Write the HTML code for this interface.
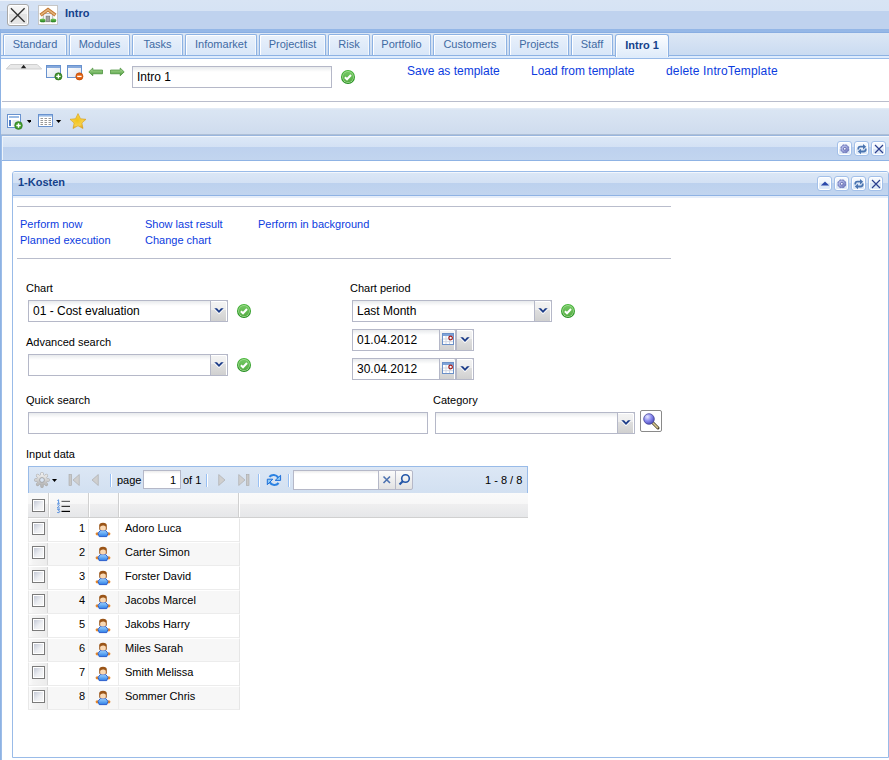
<!DOCTYPE html>
<html><head><meta charset="utf-8">
<style>
*{margin:0;padding:0;box-sizing:border-box}
html,body{width:889px;height:760px;overflow:hidden;background:#fff;font-family:"Liberation Sans",sans-serif;font-size:11px;color:#000}
.a{position:absolute}
.t{position:absolute;white-space:nowrap;line-height:13px}
/* header */
#hdr{left:0;top:0;width:889px;height:29px;background:linear-gradient(#d8e4f4 0,#d6e3f4 11px,#bfd2ee 11px,#bfd2ee 29px)}
#hdrl{left:0;top:0;width:90px;height:29px;background:linear-gradient(#eef3fa 0,#eef3fa 1px,#d5e2f4 1px,#d5e2f4 11px,#c8d9f1 11px,#c8d9f1 29px)}
#hline{left:0;top:29px;width:889px;height:4px;background:linear-gradient(#93b6e6 0,#96b8e7 3px,#89aee2 3px)}
#strip{left:0;top:33px;width:889px;height:22px;background:linear-gradient(#dce7f5,#cadbf1)}
.tab{position:absolute;top:34px;height:21px;border:1px solid #8db2e3;border-bottom:none;border-radius:2px 2px 0 0;background:linear-gradient(#e9f1fb,#d8e6f8);box-shadow:inset 1px 1px 0 #fff,inset -1px 0 0 #f4f8fd;color:#416aa3;text-align:center;line-height:19px;font-size:11px}
.tab.act{top:34px;height:23px;background:linear-gradient(#fdfeff 0,#f0f6fd 40%,#deebfa);color:#15428b;font-weight:bold;line-height:20px;border-radius:3px 3px 0 0}
#sl1{left:0;top:55px;width:889px;height:1px;background:#8db2e3}
#sl2{left:0;top:56px;width:889px;height:2px;background:#deecfd}
#sl3{left:0;top:58px;width:889px;height:1px;background:#99bbe8}
#lb{left:0;top:29px;width:1px;height:731px;background:#8db2e3}
#lb2{left:1px;top:136px;width:1px;height:624px;background:#9dbde8}
.lnk{color:#0c3ce0}
.fld{position:absolute;height:22px;border:1px solid #b5b8c8;background:linear-gradient(#e8eaec 0,#f6f7f8 3px,#fff 5px,#fff);font-size:12px;line-height:20px;padding-left:4px}
.trg{position:absolute;width:18px;height:22px;border:1px solid #b5b8c8;background:linear-gradient(#f4f4f4 0,#ededed 45%,#dfdfdf 46%,#d0d0d0 100%);border-radius:0 2px 0 0;box-shadow:inset -1px 1px 0 #fff}
.chk{position:absolute;width:14px;height:14px}
.pbtn{position:absolute;width:15px;height:15px;border:1px solid #a3c0e9;border-radius:3px;background:linear-gradient(#f7fafe 0,#eef4fc 50%,#dbe7f7 50%,#dfeaf8 100%);box-shadow:inset 0 0 0 1px #fff}
.gcb{position:absolute;width:13px;height:13px;border:2px solid #8c8c8c;background:linear-gradient(135deg,#fff,#dcdcdc)}
</style></head><body>
<svg width="0" height="0" style="position:absolute">
<defs>
<symbol id="gear" viewBox="0 0 14 14"><defs><linearGradient id="gr" x1="0" y1="0" x2="1" y2="1"><stop offset="0" stop-color="#c8cef2"/><stop offset=".5" stop-color="#a0a8de"/><stop offset="1" stop-color="#6a72b8"/></linearGradient></defs><g transform="translate(6.8 6.8)"><g fill="#7a82c2"><rect x="-0.95" y="-4.5" width="1.9" height="1.6" transform="rotate(22)"/><rect x="-0.95" y="-4.5" width="1.9" height="1.6" transform="rotate(67)"/><rect x="-0.95" y="-4.5" width="1.9" height="1.6" transform="rotate(112)"/><rect x="-0.95" y="-4.5" width="1.9" height="1.6" transform="rotate(157)"/><rect x="-0.95" y="-4.5" width="1.9" height="1.6" transform="rotate(202)"/><rect x="-0.95" y="-4.5" width="1.9" height="1.6" transform="rotate(247)"/><rect x="-0.95" y="-4.5" width="1.9" height="1.6" transform="rotate(292)"/><rect x="-0.95" y="-4.5" width="1.9" height="1.6" transform="rotate(337)"/></g><circle r="3.8" fill="url(#gr)" stroke="#6a72b6" stroke-width=".6"/><circle r="1.4" fill="#f4f6ff" stroke="#555da4" stroke-width=".8"/></g></symbol>
<symbol id="refr" viewBox="0 0 14 14"><path d="M3.3 7.6V6.6q0-1.9 2-1.9H8.6" stroke="#4a74b0" stroke-width="1.8" fill="none"/><path d="M8 2L11.2 4.7L8 7.4z" fill="#4a74b0"/><path d="M10.7 6.6V7.6q0 1.9-2 1.9H5.4" stroke="#4a74b0" stroke-width="1.8" fill="none"/><path d="M6 6.8L2.8 9.5L6 12.2z" fill="#4a74b0"/></symbol>
<symbol id="clos" viewBox="0 0 14 14"><path d="M3 3L11 11M11 3L3 11" stroke="#2c3f8e" stroke-width="1.15"/></symbol>
<symbol id="up" viewBox="0 0 14 14"><path d="M2.8 8.6L7 4.6L11.2 8.6z" fill="#2b49aa"/></symbol>
<symbol id="okc" viewBox="0 0 14 14"><defs><linearGradient id="okg" x1="0" y1="0" x2="0" y2="1"><stop offset="0" stop-color="#72c862"/><stop offset="1" stop-color="#56ad44"/></linearGradient><linearGradient id="okr" x1="0" y1="0" x2="0" y2="1"><stop offset="0" stop-color="#48b83a"/><stop offset="1" stop-color="#1f8a1c"/></linearGradient></defs><circle cx="7" cy="7" r="7" fill="url(#okr)"/><circle cx="7" cy="7" r="5.9" fill="#a8dc98"/><circle cx="7" cy="7" r="5.2" fill="url(#okg)"/><path d="M3.9 7.3L6 9.3L10 5" stroke="#fff" stroke-width="2" fill="none"/></symbol>
<symbol id="chev" viewBox="0 0 10 7"><path d="M0 1.2H2.6L5 3.6L7.4 1.2H10L5 6.2z" fill="#fff" opacity=".9"/><path d="M0.3 0.3H3L5 2.4L7 0.3H9.7L5 5z" fill="#1c3c88"/></symbol>
<symbol id="cal" viewBox="0 0 12 12"><rect x="0.5" y="0.5" width="11" height="11" fill="#fff" stroke="#6b90c8"/><rect x="1" y="1" width="10" height="2" fill="#7ea3d8"/><path d="M4 3v8M7.5 3v8M1 6h10M1 8.7h10" stroke="#cfd6e2" stroke-width="1"/><circle cx="8.6" cy="5" r="1.8" fill="none" stroke="#a01818" stroke-width="1.2"/></symbol>
<symbol id="pers" viewBox="0 0 16 16"><defs><linearGradient id="pg" x1="0" y1="0" x2="0" y2="1"><stop offset="0" stop-color="#9ad2ff"/><stop offset="1" stop-color="#2f7fe6"/></linearGradient></defs><circle cx="2.2" cy="11.8" r="1.6" fill="#e8892a"/><circle cx="13.8" cy="11.8" r="1.6" fill="#e8892a"/><path d="M5.2 8.6H10.8L13 11.4L11.8 14.6H4.2L3 11.4z" fill="url(#pg)" stroke="#1f55c8" stroke-width=".9"/><path d="M4.2 7.8V3.6Q4.2 0.8 8 0.8T11.8 3.6V7.8z" fill="#9a5518"/><ellipse cx="8" cy="5.9" rx="2.9" ry="2.7" fill="#f9d8b4"/><path d="M5 4.6Q8 2.4 11 4V2.6H5z" fill="#9a5518"/></symbol>
<symbol id="gcb" viewBox="0 0 13 13"><defs><linearGradient id="cbg" x1="0" y1="0" x2="1" y2="1"><stop offset="0" stop-color="#c4c9d6"/><stop offset=".55" stop-color="#eceef2"/><stop offset="1" stop-color="#f6f6f6"/></linearGradient></defs><rect x="0.5" y="0.5" width="12" height="12" fill="#fff" stroke="#7a7a7a"/><rect x="2" y="2" width="9" height="9" fill="url(#cbg)"/></symbol>
</defs></svg>
<!-- top header -->
<div id="hdr" class="a"></div>
<div id="hdrl" class="a"></div>
<div class="a" style="left:7px;top:4px;width:22px;height:22px;border:1px solid #a8a8a8;border-radius:3px;background:linear-gradient(#f6f6f6 0,#f1f1f1 45%,#e3e3e3 45%,#e6e6e6 100%);box-shadow:inset 0 0 0 1px #fff"><svg width="20" height="20" style="position:absolute;left:0;top:0"><path d="M2.9 3.3L16.6 16.9M16.6 3.3L2.9 16.9" stroke="#333" stroke-width="1.35"/></svg></div>
<svg class="a" style="left:38px;top:5px" width="20" height="20"><defs><linearGradient id="bush" x1="0" y1="0" x2="0" y2="1"><stop offset="0" stop-color="#7ccf5e"/><stop offset="1" stop-color="#1f7a1a"/></linearGradient></defs><rect x=".5" y=".5" width="19" height="19" fill="#fff" stroke="#c6c6c6"/><rect x="5.2" y="8.5" width="9.6" height="8.3" fill="#f2f3f6" stroke="#9a9a9a" stroke-width=".7"/><rect x="8.1" y="11.1" width="3.6" height="5.4" fill="#a2a2a2" stroke="#707070" stroke-width=".6"/><path d="M2.5 10.1L10 4.6L17.5 10.1" stroke="#c27630" stroke-width="3.4" fill="none" stroke-linejoin="miter"/><path d="M2.9 9.8L10 4.7L17.1 9.8" stroke="#e3b47c" stroke-width="1.6" fill="none"/><ellipse cx="4.6" cy="15.4" rx="2.9" ry="1.9" fill="url(#bush)"/><ellipse cx="15.4" cy="15.4" rx="2.9" ry="1.9" fill="url(#bush)"/></svg>
<div class="t" style="left:65px;top:7px;font-weight:bold;color:#15428b;font-size:11px">Intro</div>
<div id="hline" class="a"></div>
<div id="strip" class="a"></div>
<div class="tab" style="left:3px;width:64px">Standard</div>
<div class="tab" style="left:69px;width:61px">Modules</div>
<div class="tab" style="left:132px;width:51px">Tasks</div>
<div class="tab" style="left:185px;width:72px">Infomarket</div>
<div class="tab" style="left:259px;width:67px">Projectlist</div>
<div class="tab" style="left:328px;width:42px">Risk</div>
<div class="tab" style="left:372px;width:59px">Portfolio</div>
<div class="tab" style="left:433px;width:74px">Customers</div>
<div class="tab" style="left:509px;width:60px">Projects</div>
<div class="tab" style="left:571px;width:42px">Staff</div>
<div id="sl1" class="a"></div>
<div id="sl2" class="a"></div>
<div id="sl3" class="a"></div>
<div class="a" style="left:1px;top:33px;width:2px;height:22px;background:#e3ebf6"></div>
<div class="tab act" style="left:615px;width:54px">Intro 1</div>
<div id="lb" class="a"></div>
<div id="lb2" class="a"></div>

<!-- toolbar row 1 -->
<svg class="a" style="left:6px;top:64px" width="36" height="6"><path d="M0.3 5H35.7L31.2 0.5H4.5z" fill="#e8e8e8" stroke="#cfcfcf" stroke-width="1"/><path d="M14.9 4.2L17.6 0.8L20.3 4.2z" fill="#222"/></svg>
<svg class="a" style="left:46px;top:65px" width="17" height="16"><defs><linearGradient id="wg" x1="0" y1="0" x2="1" y2="1"><stop offset="0" stop-color="#fff"/><stop offset="1" stop-color="#dde3ec"/></linearGradient></defs><rect x="0.5" y="0.5" width="14" height="12" fill="url(#wg)" stroke="#6892cf"/><rect x="1" y="1" width="13" height="2" fill="#86a9dc"/><circle cx="12.4" cy="11.4" r="3.6" fill="#3f8f2a" stroke="#2c6e1c" stroke-width=".6"/><path d="M12.4 9.2v4.4M10.2 11.4h4.4" stroke="#fff" stroke-width="1.4"/></svg>
<svg class="a" style="left:67px;top:65px" width="17" height="16"><rect x="0.5" y="0.5" width="14" height="12" fill="url(#wg)" stroke="#6892cf"/><rect x="1" y="1" width="13" height="2" fill="#86a9dc"/><circle cx="12.4" cy="11.4" r="3.6" fill="#e0600f" stroke="#b84808" stroke-width=".6"/><path d="M10.2 11.4h4.4" stroke="#fff" stroke-width="1.4"/></svg>
<svg class="a" style="left:88px;top:67px" width="16" height="10"><defs><linearGradient id="ag" x1="0" y1="0" x2="0" y2="1"><stop offset="0" stop-color="#b4e0a0"/><stop offset="1" stop-color="#4a9a38"/></linearGradient></defs><path d="M0.8 4.9L4.8 1V3H14.5V6.8H4.8V8.8z" fill="url(#ag)" stroke="#3f8a30" stroke-width=".7"/></svg>
<svg class="a" style="left:109px;top:67px" width="16" height="10"><path d="M15.2 4.9L11.2 1V3H1.5V6.8H11.2V8.8z" fill="url(#ag)" stroke="#3f8a30" stroke-width=".7"/></svg>
<div class="fld" style="left:132px;top:66px;width:200px">Intro 1</div>
<svg class="a" style="left:341px;top:70px" width="14" height="14"><use href="#okc"/></svg>
<div class="t lnk" style="left:407px;top:65px;font-size:12px">Save as template</div>
<div class="t lnk" style="left:531px;top:65px;font-size:12px">Load from template</div>
<div class="t lnk" style="left:666px;top:65px;font-size:12px;letter-spacing:.15px">delete IntroTemplate</div>
<div class="a" style="left:2px;top:101px;width:887px;height:1px;background:#b9bdcc"></div>

<!-- toolbar row 2 -->
<div class="a" style="left:1px;top:108px;width:888px;height:28px;background:linear-gradient(#e6eef8 0,#dae5f3 2px,#cfdcee 26px,#aebfd6 26px,#aebfd6 27px);border-bottom:1px solid #99b6de"></div>
<svg class="a" style="left:7px;top:114px" width="24" height="16"><rect x="0.5" y="0.5" width="13" height="13" fill="#fff" stroke="#6892cf"/><rect x="2" y="2" width="10" height="2" fill="#9bbbe5"/><rect x="2" y="6" width="2" height="6" fill="#4a78c0"/><rect x="5.5" y="6" width="6.5" height="6" fill="#e6eaf0"/><circle cx="11.5" cy="11.5" r="3.9" fill="#3f9a2a" stroke="#2c6e1c" stroke-width=".5"/><path d="M11.5 9.3v4.4M9.3 11.5h4.4" stroke="#fff" stroke-width="1.4"/><path d="M19.8 6h5.2l-2.6 3z" fill="#000"/></svg>
<svg class="a" style="left:38px;top:114px" width="24" height="14"><rect x="0.5" y="0.5" width="14" height="12" fill="#fff" stroke="#6892cf"/><rect x="1" y="1" width="13" height="1.6" fill="#9bbbe5"/><path d="M2 4.5h11M2 6.5h11M2 8.5h11M2 10.5h11" stroke="#999" stroke-width="1" stroke-dasharray="2.5 1.5" stroke-dashoffset="-.5"/><path d="M18 6h5.2l-2.6 3z" fill="#000"/></svg>
<svg class="a" style="left:69px;top:113px" width="18" height="17"><defs><radialGradient id="stg" cx=".45" cy=".45" r=".6"><stop offset="0" stop-color="#f2c418"/><stop offset=".6" stop-color="#f6d04a"/><stop offset="1" stop-color="#e09a10"/></radialGradient></defs><path d="M9 0.6L11.5 5.7L17 6.3L12.9 10L14 15.5L9 12.8L4 15.5L5.1 10L1 6.3L6.5 5.7z" fill="url(#stg)" stroke="#d9a015" stroke-width=".6" stroke-linejoin="round"/></svg>

<!-- outer panel header -->
<div class="a" style="left:2px;top:136px;width:887px;height:25px;background:linear-gradient(#f2f6fc 0,#f2f6fc 1px,#dce8f7 1px,#d3e1f4 11px,#bdd1ee 11px,#c2d5ef 24px);border-bottom:1px solid #8fb3e4;box-shadow:inset 1px 0 0 #eef4fb"></div>
<div class="pbtn" style="left:837px;top:141px"><svg width="14" height="14" style="position:absolute;left:-0.5px;top:-0.5px"><use href="#gear"/></svg></div>
<div class="pbtn" style="left:854px;top:141px"><svg width="14" height="14" style="position:absolute;left:-0.5px;top:-0.5px"><use href="#refr"/></svg></div>
<div class="pbtn" style="left:871px;top:141px"><svg width="14" height="14" style="position:absolute;left:-0.5px;top:-0.5px"><use href="#clos"/></svg></div>

<!-- inner panel -->
<div class="a" style="left:12px;top:171px;width:877px;height:587px;border:1px solid #99bbe8;border-radius:3px 3px 0 0"></div>
<div class="a" style="left:13px;top:172px;width:875px;height:24px;background:linear-gradient(#f3f7fd 0,#f3f7fd 1px,#dbe7f6 1px,#d3e1f4 11px,#bcd1ee 11px,#c2d5ef 23px);border-bottom:1px solid #8fb3e4;border-radius:2px 2px 0 0"></div>
<div class="a" style="left:13px;top:196px;width:875px;height:2px;background:#e6eefa"></div>
<div class="t" style="left:18px;top:176px;font-weight:bold;color:#15428b">1-Kosten</div>
<div class="pbtn" style="left:817px;top:176px"><svg width="14" height="14" style="position:absolute;left:-0.5px;top:-0.5px"><use href="#up"/></svg></div>
<div class="pbtn" style="left:834px;top:176px"><svg width="14" height="14" style="position:absolute;left:-0.5px;top:-0.5px"><use href="#gear"/></svg></div>
<div class="pbtn" style="left:851px;top:176px"><svg width="14" height="14" style="position:absolute;left:-0.5px;top:-0.5px"><use href="#refr"/></svg></div>
<div class="pbtn" style="left:868px;top:176px"><svg width="14" height="14" style="position:absolute;left:-0.5px;top:-0.5px"><use href="#clos"/></svg></div>

<div class="a" style="left:17px;top:206px;width:654px;height:1px;background:#b9bdcc"></div>
<div class="t lnk" style="left:20px;top:218px">Perform now</div>
<div class="t lnk" style="left:145px;top:218px">Show last result</div>
<div class="t lnk" style="left:258px;top:218px">Perform in background</div>
<div class="t lnk" style="left:20px;top:234px">Planned execution</div>
<div class="t lnk" style="left:145px;top:234px">Change chart</div>
<div class="a" style="left:17px;top:258px;width:654px;height:1px;background:#b9bdcc"></div>

<!-- form -->
<div class="t" style="left:26px;top:282px">Chart</div>
<div class="fld" style="left:28px;top:300px;width:200px">01 - Cost evaluation</div>
<div class="trg" style="left:210px;top:300px"><svg width="10" height="7" style="position:absolute;left:2.5px;top:7px"><use href="#chev"/></svg></div>
<div class="t" style="left:350px;top:282px">Chart period</div>
<div class="fld" style="left:352px;top:300px;width:200px">Last Month</div>
<div class="trg" style="left:534px;top:300px"><svg width="10" height="7" style="position:absolute;left:2.5px;top:7px"><use href="#chev"/></svg></div>
<div class="t" style="left:26px;top:336px">Advanced search</div>
<div class="fld" style="left:28px;top:354px;width:200px"></div>
<div class="trg" style="left:210px;top:354px"><svg width="10" height="7" style="position:absolute;left:2.5px;top:7px"><use href="#chev"/></svg></div>
<div class="fld" style="left:352px;top:329px;width:122px">01.04.2012</div>
<div class="trg" style="left:439px;top:329px;width:17px"><svg width="12" height="12" style="position:absolute;left:2px;top:3px"><use href="#cal"/></svg></div>
<div class="trg" style="left:456px;top:329px;width:18px"><svg width="10" height="7" style="position:absolute;left:2.5px;top:7px"><use href="#chev"/></svg></div>
<div class="fld" style="left:352px;top:358px;width:122px">30.04.2012</div>
<div class="trg" style="left:439px;top:358px;width:17px"><svg width="12" height="12" style="position:absolute;left:2px;top:3px"><use href="#cal"/></svg></div>
<div class="trg" style="left:456px;top:358px;width:18px"><svg width="10" height="7" style="position:absolute;left:2.5px;top:7px"><use href="#chev"/></svg></div>
<svg class="a" style="left:237px;top:304px" width="14" height="14"><use href="#okc"/></svg>
<svg class="a" style="left:561px;top:304px" width="14" height="14"><use href="#okc"/></svg>
<svg class="a" style="left:237px;top:358px" width="14" height="14"><use href="#okc"/></svg>
<div class="t" style="left:26px;top:394px">Quick search</div>
<div class="fld" style="left:28px;top:412px;width:400px"></div>
<div class="t" style="left:433px;top:394px">Category</div>
<div class="fld" style="left:435px;top:412px;width:200px"></div>
<div class="trg" style="left:617px;top:412px"><svg width="10" height="7" style="position:absolute;left:2.5px;top:7px"><use href="#chev"/></svg></div>
<div class="a" style="left:640px;top:410px;width:22px;height:22px;border:1px solid #8a8a8a;border-radius:2px;background:#fff"><svg width="20" height="20" style="position:absolute;left:0;top:0"><defs><radialGradient id="mg" cx=".35" cy=".3" r=".75"><stop offset="0" stop-color="#e8e8ff"/><stop offset=".5" stop-color="#8c8cf0"/><stop offset="1" stop-color="#4a4ab8"/></radialGradient></defs><path d="M11 11L17 17" stroke="#3a3320" stroke-width="3" stroke-linecap="round"/><path d="M11 11L16.6 16.6" stroke="#d8c890" stroke-width="1.6" stroke-linecap="round"/><circle cx="8" cy="8" r="5.3" fill="url(#mg)" stroke="#44449a" stroke-width=".8"/></svg></div>
<div class="t" style="left:26px;top:448px">Input data</div>

<!-- grid -->
<div class="a" style="left:28px;top:466px;width:500px;height:27px;background:linear-gradient(#dce7f5,#d2e0f1);border:1px solid #99bbe8;border-bottom:none"></div>
<svg class="a" style="left:34px;top:472px" width="24" height="16"><defs><linearGradient id="gg" x1="0" y1="0" x2="0" y2="1"><stop offset="0" stop-color="#ececec"/><stop offset="1" stop-color="#b4b4b4"/></linearGradient></defs><g transform="translate(8 8)"><g stroke="#a8a8a8" stroke-width="3.4" stroke-linecap="round"><path d="M0-6.2V6.2M-6.2 0H6.2M-4.4-4.4L4.4 4.4M-4.4 4.4L4.4-4.4"/></g><g stroke="url(#gg)" stroke-width="2.4" stroke-linecap="round"><path d="M0-6.2V6.2M-6.2 0H6.2M-4.4-4.4L4.4 4.4M-4.4 4.4L4.4-4.4"/></g><circle r="5" fill="url(#gg)"/><circle r="2.4" fill="#d8e4f3" stroke="#9a9a9a" stroke-width=".8"/></g><path d="M18 7h5l-2.5 3z" fill="#000"/></svg>
<svg class="a" style="left:68px;top:474px" width="12" height="12"><rect x="1" y="0.5" width="2.6" height="11" fill="#c8c8c8" stroke="#a8a8a8" stroke-width=".6"/><path d="M11.3 0.5V11.5L5 6z" fill="#cfcfcf" stroke="#a8a8a8" stroke-width=".6"/></svg>
<svg class="a" style="left:91px;top:474px" width="8" height="12"><path d="M7.3 0.5V11.5L1 6z" fill="#cfcfcf" stroke="#a8a8a8" stroke-width=".6"/></svg>
<div class="a" style="left:110px;top:474px;width:2px;height:13px;border-left:1px solid #98c0f4;border-right:1px solid #fff"></div>
<div class="t" style="left:117px;top:474px">page</div>
<div class="a" style="left:143px;top:470px;width:38px;height:19px;border:1px solid #b5b8c8;background:linear-gradient(#ececec 0,#fff 3px);font-size:11px;line-height:19px;text-align:right;padding-right:4px">1</div>
<div class="t" style="left:183px;top:474px">of 1</div>
<div class="a" style="left:206px;top:474px;width:2px;height:13px;border-left:1px solid #98c0f4;border-right:1px solid #fff"></div>
<svg class="a" style="left:218px;top:474px" width="8" height="12"><path d="M0.7 0.5V11.5L7 6z" fill="#cfcfcf" stroke="#a8a8a8" stroke-width=".6"/></svg>
<svg class="a" style="left:238px;top:474px" width="12" height="12"><path d="M0.7 0.5V11.5L7 6z" fill="#cfcfcf" stroke="#a8a8a8" stroke-width=".6"/><rect x="8.4" y="0.5" width="2.6" height="11" fill="#c8c8c8" stroke="#a8a8a8" stroke-width=".6"/></svg>
<div class="a" style="left:258px;top:474px;width:2px;height:13px;border-left:1px solid #98c0f4;border-right:1px solid #fff"></div>
<svg class="a" style="left:266px;top:472px" width="16" height="16"><path d="M3.4 4.9A5.4 5.4 0 0 1 12.2 5.6" stroke="#2b82e2" stroke-width="2.1" fill="none"/><path d="M14.6 3.3V8.4H9.2z" fill="#8ccaf8" stroke="#1f6fd8" stroke-width="1"/><path d="M12.6 11A5.4 5.4 0 0 1 3.8 10.4" stroke="#2b82e2" stroke-width="2.1" fill="none"/><path d="M1.3 12.7V7.2H6.8z" fill="#8ccaf8" stroke="#1f6fd8" stroke-width="1"/></svg>
<div class="a" style="left:288px;top:474px;width:2px;height:13px;border-left:1px solid #98c0f4;border-right:1px solid #fff"></div>
<div class="a" style="left:293px;top:470px;width:86px;height:20px;border:1px solid #b5b8c8;background:linear-gradient(#ececec 0,#fff 3px)"></div>
<div class="a" style="left:378px;top:470px;width:18px;height:20px;border:1px solid #b5b8c8;background:linear-gradient(#fbfbfb,#e2e2e2)"><svg width="16" height="18" style="position:absolute;left:0;top:0"><path d="M4.5 5.5L11 12M11 5.5L4.5 12" stroke="#4d72b0" stroke-width="1.6"/></svg></div>
<div class="a" style="left:395px;top:470px;width:18px;height:20px;border:1px solid #b5b8c8;background:linear-gradient(#fbfbfb,#e2e2e2);border-radius:0 2px 2px 0"><svg width="16" height="18" style="position:absolute;left:0;top:0"><circle cx="9.5" cy="7.5" r="3.8" fill="none" stroke="#2457a8" stroke-width="1.6"/><path d="M7 10L3.5 13.5" stroke="#2457a8" stroke-width="2.2"/></svg></div>
<div class="t" style="left:485px;top:474px">1 - 8 / 8</div>
<div class="a" style="left:28px;top:493px;width:500px;height:25px;background:linear-gradient(#fafafa 0,#f7f7f7 11px,#efeff0 11px,#e6e7e9 24px);border-bottom:1px solid #d0d0d0"></div>
<div class="a" style="left:48px;top:493px;width:2px;height:24px;border-left:1px solid #d0d0d0;border-right:1px solid #fff"></div>
<div class="a" style="left:88px;top:493px;width:2px;height:24px;border-left:1px solid #d0d0d0;border-right:1px solid #fff"></div>
<div class="a" style="left:118px;top:493px;width:2px;height:24px;border-left:1px solid #d0d0d0;border-right:1px solid #fff"></div>
<div class="a" style="left:238px;top:493px;width:2px;height:24px;border-left:1px solid #d0d0d0;border-right:1px solid #fff"></div>
<svg class="a" style="left:32px;top:499px" width="13" height="13"><use href="#gcb"/></svg>
<svg class="a" style="left:56px;top:499px" width="15" height="15"><g stroke="#5b93e0" stroke-width="1" fill="none"><path d="M1.3 1.6L2.6 .8V4.2M1.2 4.3h2.6"/><path d="M1.2 6.2q.6-.9 1.5-.7t.5 1.3L1.2 9H3.9"/><path d="M1.2 10.4h2.4L2.4 11.7q1.6 0 1.4 1.2t-2.6.6"/></g><path d="M5.5 2.4h8.5" stroke="#666" stroke-width="1.2"/><path d="M5.5 7.4h8.5" stroke="#333" stroke-width="1.2"/><path d="M5.5 12.4h8.5" stroke="#000" stroke-width="1.2"/></svg>
<div class="a" style="left:28px;top:518px;width:212px;height:24px;background:#fff;border-top:1px solid #fff;border-bottom:1px solid #ececec;border-right:1px solid #e6e6e6;border-left:1px solid #e8e8e8"></div>
<div class="a" style="left:29px;top:519px;width:19px;height:22px;background:linear-gradient(90deg,#fbfbfb 0,#f3f3f3 25%,#ececec 100%);border-right:1px solid #d8d8d8"></div>
<div class="a" style="left:88px;top:519px;width:1px;height:22px;background:#ececec"></div>
<div class="a" style="left:118px;top:519px;width:1px;height:22px;background:#ececec"></div>
<svg class="a" style="left:32px;top:522px" width="13" height="13"><use href="#gcb"/></svg>
<div class="t" style="left:48px;top:522px;width:37px;text-align:right">1</div>
<svg class="a" style="left:95px;top:522px" width="16" height="16"><use href="#pers"/></svg>
<div class="t" style="left:125px;top:522px">Adoro Luca</div>
<div class="a" style="left:28px;top:542px;width:212px;height:24px;background:#f7f7f7;border-top:1px solid #fff;border-bottom:1px solid #ececec;border-right:1px solid #e6e6e6;border-left:1px solid #e8e8e8"></div>
<div class="a" style="left:29px;top:543px;width:19px;height:22px;background:linear-gradient(90deg,#fbfbfb 0,#f3f3f3 25%,#ececec 100%);border-right:1px solid #d8d8d8"></div>
<div class="a" style="left:88px;top:543px;width:1px;height:22px;background:#ececec"></div>
<div class="a" style="left:118px;top:543px;width:1px;height:22px;background:#ececec"></div>
<svg class="a" style="left:32px;top:546px" width="13" height="13"><use href="#gcb"/></svg>
<div class="t" style="left:48px;top:546px;width:37px;text-align:right">2</div>
<svg class="a" style="left:95px;top:546px" width="16" height="16"><use href="#pers"/></svg>
<div class="t" style="left:125px;top:546px">Carter Simon</div>
<div class="a" style="left:28px;top:566px;width:212px;height:24px;background:#fff;border-top:1px solid #fff;border-bottom:1px solid #ececec;border-right:1px solid #e6e6e6;border-left:1px solid #e8e8e8"></div>
<div class="a" style="left:29px;top:567px;width:19px;height:22px;background:linear-gradient(90deg,#fbfbfb 0,#f3f3f3 25%,#ececec 100%);border-right:1px solid #d8d8d8"></div>
<div class="a" style="left:88px;top:567px;width:1px;height:22px;background:#ececec"></div>
<div class="a" style="left:118px;top:567px;width:1px;height:22px;background:#ececec"></div>
<svg class="a" style="left:32px;top:570px" width="13" height="13"><use href="#gcb"/></svg>
<div class="t" style="left:48px;top:570px;width:37px;text-align:right">3</div>
<svg class="a" style="left:95px;top:570px" width="16" height="16"><use href="#pers"/></svg>
<div class="t" style="left:125px;top:570px">Forster David</div>
<div class="a" style="left:28px;top:590px;width:212px;height:24px;background:#f7f7f7;border-top:1px solid #fff;border-bottom:1px solid #ececec;border-right:1px solid #e6e6e6;border-left:1px solid #e8e8e8"></div>
<div class="a" style="left:29px;top:591px;width:19px;height:22px;background:linear-gradient(90deg,#fbfbfb 0,#f3f3f3 25%,#ececec 100%);border-right:1px solid #d8d8d8"></div>
<div class="a" style="left:88px;top:591px;width:1px;height:22px;background:#ececec"></div>
<div class="a" style="left:118px;top:591px;width:1px;height:22px;background:#ececec"></div>
<svg class="a" style="left:32px;top:594px" width="13" height="13"><use href="#gcb"/></svg>
<div class="t" style="left:48px;top:594px;width:37px;text-align:right">4</div>
<svg class="a" style="left:95px;top:594px" width="16" height="16"><use href="#pers"/></svg>
<div class="t" style="left:125px;top:594px">Jacobs Marcel</div>
<div class="a" style="left:28px;top:614px;width:212px;height:24px;background:#fff;border-top:1px solid #fff;border-bottom:1px solid #ececec;border-right:1px solid #e6e6e6;border-left:1px solid #e8e8e8"></div>
<div class="a" style="left:29px;top:615px;width:19px;height:22px;background:linear-gradient(90deg,#fbfbfb 0,#f3f3f3 25%,#ececec 100%);border-right:1px solid #d8d8d8"></div>
<div class="a" style="left:88px;top:615px;width:1px;height:22px;background:#ececec"></div>
<div class="a" style="left:118px;top:615px;width:1px;height:22px;background:#ececec"></div>
<svg class="a" style="left:32px;top:618px" width="13" height="13"><use href="#gcb"/></svg>
<div class="t" style="left:48px;top:618px;width:37px;text-align:right">5</div>
<svg class="a" style="left:95px;top:618px" width="16" height="16"><use href="#pers"/></svg>
<div class="t" style="left:125px;top:618px">Jakobs Harry</div>
<div class="a" style="left:28px;top:638px;width:212px;height:24px;background:#f7f7f7;border-top:1px solid #fff;border-bottom:1px solid #ececec;border-right:1px solid #e6e6e6;border-left:1px solid #e8e8e8"></div>
<div class="a" style="left:29px;top:639px;width:19px;height:22px;background:linear-gradient(90deg,#fbfbfb 0,#f3f3f3 25%,#ececec 100%);border-right:1px solid #d8d8d8"></div>
<div class="a" style="left:88px;top:639px;width:1px;height:22px;background:#ececec"></div>
<div class="a" style="left:118px;top:639px;width:1px;height:22px;background:#ececec"></div>
<svg class="a" style="left:32px;top:642px" width="13" height="13"><use href="#gcb"/></svg>
<div class="t" style="left:48px;top:642px;width:37px;text-align:right">6</div>
<svg class="a" style="left:95px;top:642px" width="16" height="16"><use href="#pers"/></svg>
<div class="t" style="left:125px;top:642px">Miles Sarah</div>
<div class="a" style="left:28px;top:662px;width:212px;height:24px;background:#fff;border-top:1px solid #fff;border-bottom:1px solid #ececec;border-right:1px solid #e6e6e6;border-left:1px solid #e8e8e8"></div>
<div class="a" style="left:29px;top:663px;width:19px;height:22px;background:linear-gradient(90deg,#fbfbfb 0,#f3f3f3 25%,#ececec 100%);border-right:1px solid #d8d8d8"></div>
<div class="a" style="left:88px;top:663px;width:1px;height:22px;background:#ececec"></div>
<div class="a" style="left:118px;top:663px;width:1px;height:22px;background:#ececec"></div>
<svg class="a" style="left:32px;top:666px" width="13" height="13"><use href="#gcb"/></svg>
<div class="t" style="left:48px;top:666px;width:37px;text-align:right">7</div>
<svg class="a" style="left:95px;top:666px" width="16" height="16"><use href="#pers"/></svg>
<div class="t" style="left:125px;top:666px">Smith Melissa</div>
<div class="a" style="left:28px;top:686px;width:212px;height:24px;background:#f7f7f7;border-top:1px solid #fff;border-bottom:1px solid #ececec;border-right:1px solid #e6e6e6;border-left:1px solid #e8e8e8"></div>
<div class="a" style="left:29px;top:687px;width:19px;height:22px;background:linear-gradient(90deg,#fbfbfb 0,#f3f3f3 25%,#ececec 100%);border-right:1px solid #d8d8d8"></div>
<div class="a" style="left:88px;top:687px;width:1px;height:22px;background:#ececec"></div>
<div class="a" style="left:118px;top:687px;width:1px;height:22px;background:#ececec"></div>
<svg class="a" style="left:32px;top:690px" width="13" height="13"><use href="#gcb"/></svg>
<div class="t" style="left:48px;top:690px;width:37px;text-align:right">8</div>
<svg class="a" style="left:95px;top:690px" width="16" height="16"><use href="#pers"/></svg>
<div class="t" style="left:125px;top:690px">Sommer Chris</div>
</body></html>
